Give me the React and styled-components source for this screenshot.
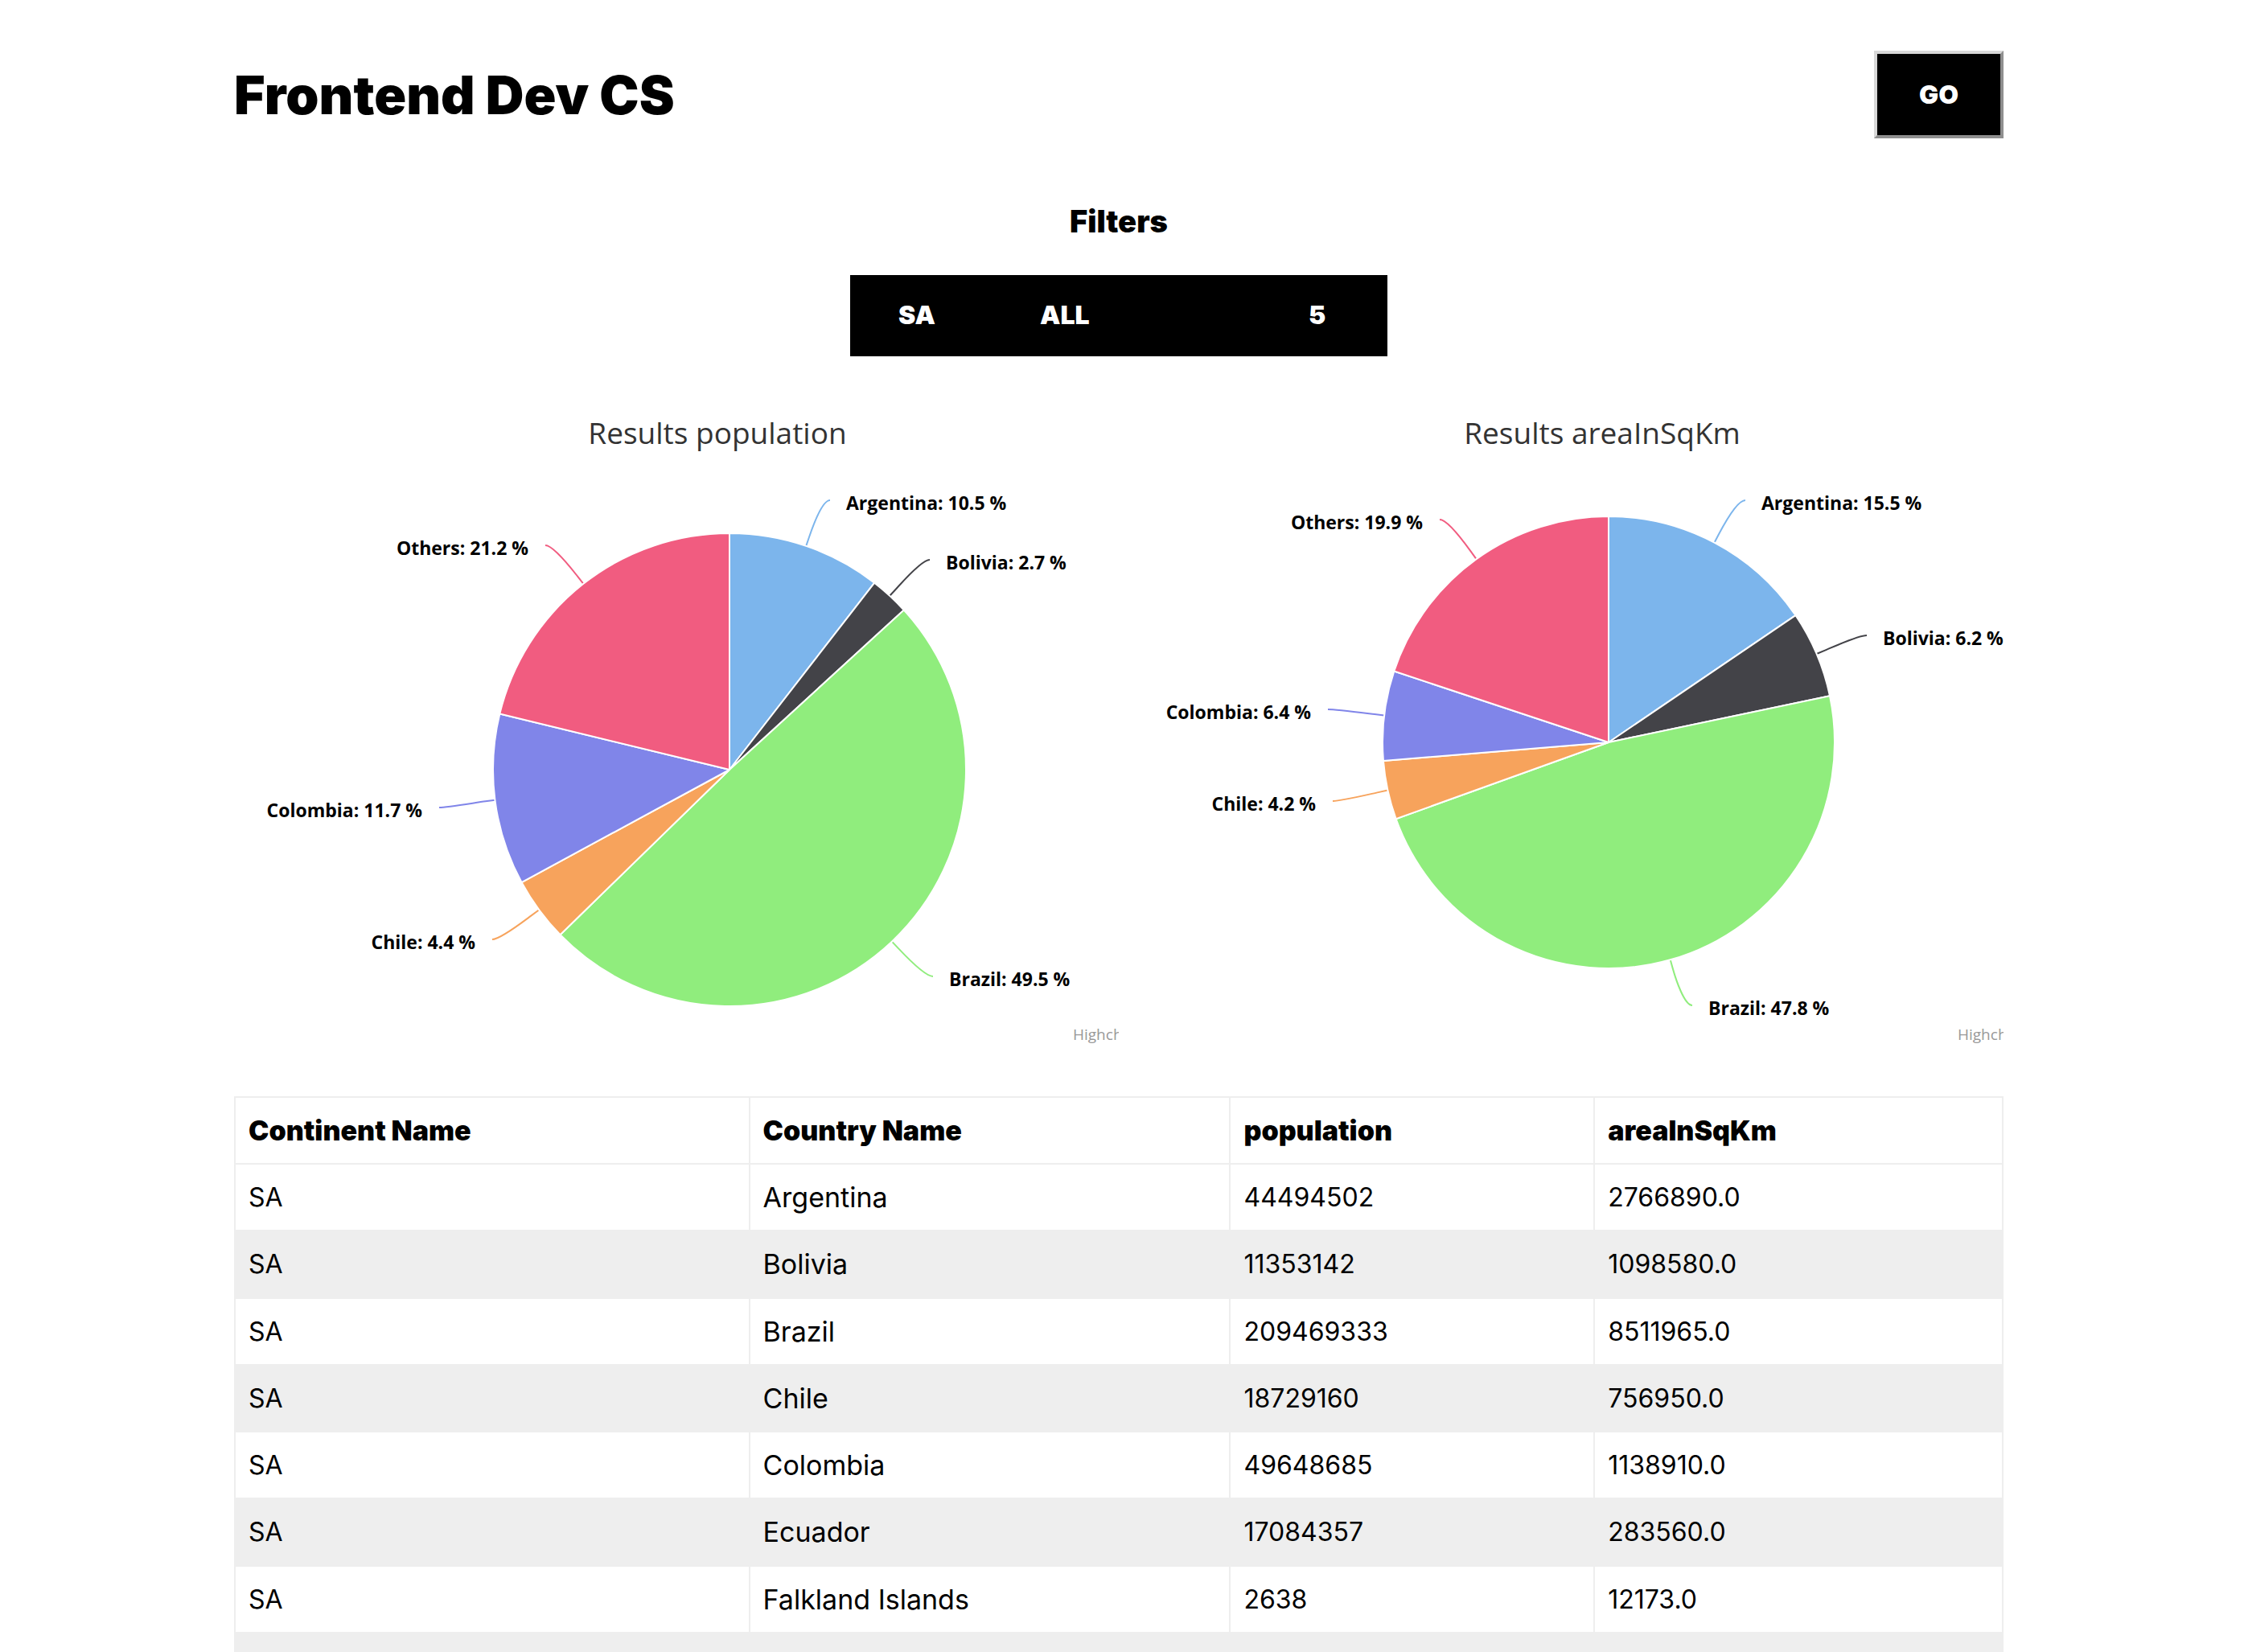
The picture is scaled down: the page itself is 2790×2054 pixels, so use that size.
import React from "react";
import styled, { createGlobalStyle } from "styled-components";

const GlobalStyle = createGlobalStyle`
  * { box-sizing: border-box; }
  body {
    margin: 0;
    background: #fff;
    color: #000;
    font-family: Inter, "Liberation Sans", sans-serif;
    font-size: 32px;
  }
`;

const Page = styled.div`
  height: 100vh;
  overflow: hidden;
  padding: 63px 8px 0 0;
`;

const Container = styled.div`
  width: 80%;
  max-width: 2200px;
  margin: 0 auto;
`;

const Header = styled.header`
  display: flex;
  align-items: center;
  justify-content: space-between;
`;

const Title = styled.h1`
  margin: 0;
  font-size: 66px;
  line-height: 96px;
  font-weight: 900;
`;

const GoButton = styled.button`
  width: 161px;
  height: 109px;
  padding: 0;
  border: 4px solid;
  border-color: #d8d8d8 #8f8f8f #8f8f8f #d8d8d8;
  background: #000;
  color: #fff;
  font-family: inherit;
  font-size: 32px;
  font-weight: 900;
`;

const Filters = styled.section`
  display: flex;
  flex-direction: column;
  align-items: center;
  gap: 42px;
  padding-top: 78px;
`;

const FiltersTitle = styled.h3`
  margin: 0;
  font-size: 38px;
  line-height: 50px;
  font-weight: 900;
`;

const FilterBar = styled.div`
  display: flex;
  height: 101px;
  background: #000;
`;

const FilterSelect = styled.select`
  appearance: none;
  width: ${(p) => p.$width}px;
  padding: 0 0 2px 60px;
  border: 0;
  border-radius: 0;
  background: transparent;
  color: #fff;
  font-family: inherit;
  font-size: 32px;
  font-weight: 900;
`;

const Charts = styled.section`
  display: grid;
  grid-template-columns: 1fr 1fr;
  padding: 60px 0;
`;

const ChartBox = styled.div`
  min-width: 0;
  overflow: hidden;
`;

const ChartSvg = styled.svg`
  display: block;
  font-family: "Open Sans", "Noto Sans", sans-serif;
`;

const ChartTitle = styled.text`
  font-size: 37px;
  fill: #333;
  text-anchor: middle;
`;

const SliceLabel = styled.text`
  font-size: 23px;
  font-weight: 700;
  fill: #000;
  text-anchor: ${(p) => p.$anchor};
`;

const Credits = styled.text`
  font-size: 19px;
  fill: #999;
`;

const Table = styled.table`
  width: 100%;
  table-layout: fixed;
  border-collapse: collapse;
  line-height: 48px;
`;

const Column = styled.col`
  width: ${(p) => p.$width};
`;

const HeadCell = styled.th`
  height: 83px;
  padding: 0 16px;
  border: 2px solid #eee;
  text-align: left;
  font-size: 34px;
  font-weight: 900;
`;

const Cell = styled.td`
  height: 83px;
  padding: 0 16px;
  border: 2px solid #eee;
  font-size: ${(p) => (p.$name ? 34 : 32)}px;
`;

const Row = styled.tr`
  &:nth-child(even) {
    background: #eee;
  }
  &:nth-child(4n + 2) {
    height: 84px;
  }
`;

const COLORS = ["#7cb5ec", "#434348", "#90ed7d", "#f7a35c", "#8085e9", "#f15c80"];

// x/y is the end of the connector line next to the label.
const POPULATION = {
  title: "Results population",
  cx: 616,
  cy: 454,
  r: 294,
  slices: [
    { name: "Argentina", value: 10.5, x: 741, y: 119 },
    { name: "Bolivia", value: 2.7, x: 865, y: 193 },
    { name: "Brazil", value: 49.5, x: 869, y: 711 },
    { name: "Chile", value: 4.4, x: 321, y: 665 },
    { name: "Colombia", value: 11.7, x: 255, y: 501 },
    { name: "Others", value: 21.2, x: 387, y: 175 },
  ],
};

const AREA = {
  title: "Results areaInSqKm",
  cx: 609,
  cy: 420,
  r: 281,
  slices: [
    { name: "Argentina", value: 15.5, x: 779, y: 119 },
    { name: "Bolivia", value: 6.2, x: 930, y: 287 },
    { name: "Brazil", value: 47.8, x: 713, y: 747 },
    { name: "Chile", value: 4.2, x: 266, y: 493 },
    { name: "Colombia", value: 6.4, x: 260, y: 379 },
    { name: "Others", value: 19.9, x: 399, y: 143 },
  ],
};

const ROWS = [
  ["SA", "Argentina", "44494502", "2766890.0"],
  ["SA", "Bolivia", "11353142", "1098580.0"],
  ["SA", "Brazil", "209469333", "8511965.0"],
  ["SA", "Chile", "18729160", "756950.0"],
  ["SA", "Colombia", "49648685", "1138910.0"],
  ["SA", "Ecuador", "17084357", "283560.0"],
  ["SA", "Falkland Islands", "2638", "12173.0"],
  ["", "", "", ""],
];

function PieChart({ title, cx, cy, r, slices }) {
  const point = (share, radius) => {
    const angle = (share / 100) * 2 * Math.PI;
    return `${cx + radius * Math.sin(angle)} ${cy - radius * Math.cos(angle)}`;
  };
  let start = 0;
  return (
    <ChartBox>
      <ChartSvg width="1200" height="800" role="img" aria-label={title}>
        <ChartTitle x="601" y="49">
          {title}
        </ChartTitle>
        {slices.map((slice, i) => {
          const from = start;
          const to = start + slice.value;
          const mid = (from + to) / 2;
          start = to;
          const onRight = mid < 50;
          const bend = onRight ? slice.x - 10 : slice.x + 10;
          return (
            <g key={slice.name}>
              <path
                d={`M${slice.x} ${slice.y}C${bend} ${slice.y} ${point(mid, r + 24)} ${point(mid, r + 12)}L${point(mid, r)}`}
                fill="none"
                stroke={COLORS[i]}
                strokeWidth="2"
              />
              <path
                d={`M${cx} ${cy}L${point(from, r)}A${r} ${r} 0 0 1 ${point(to, r)}Z`}
                fill={COLORS[i]}
                stroke="#fff"
                strokeWidth="2"
                strokeLinejoin="round"
              />
              <SliceLabel
                $anchor={onRight ? "start" : "end"}
                x={onRight ? slice.x + 20 : slice.x - 21}
                y={slice.y + 12}
              >
                {`${slice.name}: ${slice.value} %`}
              </SliceLabel>
            </g>
          );
        })}
        <a href="https://www.highcharts.com">
          <Credits x="1043" y="790">
            Highcharts.com
          </Credits>
        </a>
      </ChartSvg>
    </ChartBox>
  );
}

export default function App() {
  return (
    <>
      <GlobalStyle />
      <Page>
        <Container>
          <Header>
            <Title>Frontend Dev CS</Title>
            <GoButton type="button">GO</GoButton>
          </Header>

          <Filters>
            <FiltersTitle>Filters</FiltersTitle>
            <FilterBar>
              <FilterSelect $width={176} aria-label="Continent">
                <option>SA</option>
              </FilterSelect>
              <FilterSelect $width={334} aria-label="Metric">
                <option>ALL</option>
              </FilterSelect>
              <FilterSelect $width={158} aria-label="Limit">
                <option>5</option>
              </FilterSelect>
            </FilterBar>
          </Filters>

          <Charts>
            <PieChart {...POPULATION} />
            <PieChart {...AREA} />
          </Charts>

          <Table>
            <colgroup>
              <Column $width="29.1%" />
              <Column $width="27.2%" />
              <Column $width="20.6%" />
              <Column $width="23.1%" />
            </colgroup>
            <thead>
              <tr>
                <HeadCell>Continent Name</HeadCell>
                <HeadCell>Country Name</HeadCell>
                <HeadCell>population</HeadCell>
                <HeadCell>areaInSqKm</HeadCell>
              </tr>
            </thead>
            <tbody>
              {ROWS.map((row, i) => (
                <Row key={i}>
                  {row.map((value, j) => (
                    <Cell key={j} $name={j === 1}>
                      {value}
                    </Cell>
                  ))}
                </Row>
              ))}
            </tbody>
          </Table>
        </Container>
      </Page>
    </>
  );
}
